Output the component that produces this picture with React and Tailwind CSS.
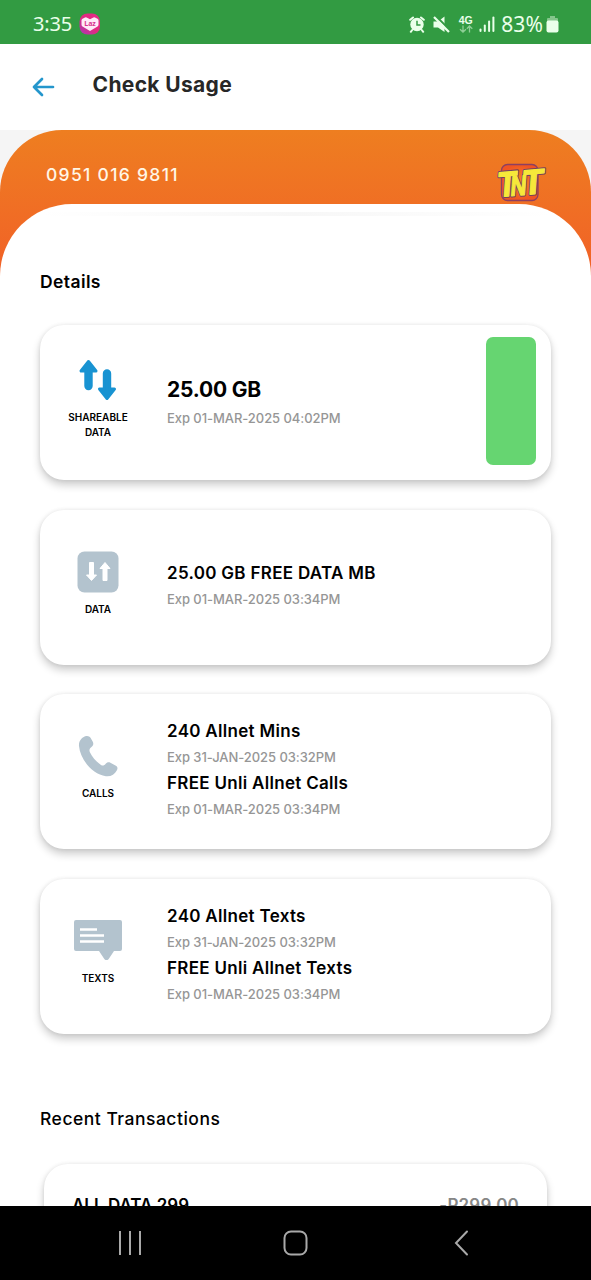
import React from 'react';

const ShareIcon = () => (
    <svg width="40" height="42" viewBox="0 0 40 42" fill="#1893d2" stroke="#1893d2" strokeLinejoin="round">
        <path d="M10.500 2.500 3 12H7.800V27a2.700 2.700 0 0 0 5.400 0V12H18Z" strokeWidth="3" />
        <path d="M29 39.500 21.500 30H26.300V14.500a2.700 2.700 0 0 1 5.400 0V30H36.500Z" strokeWidth="3" />
    </svg>
);

const DataIcon = () => (
    <svg width="42" height="42" viewBox="0 0 42 42">
        <rect x="0.5" y="0.5" width="41" height="41" rx="7" fill="#b3c3ce" />
        <g fill="#fff" stroke="#fff" strokeWidth="1" strokeLinejoin="round">
            <path d="M14.500 29.500 9.500 24H12.500V11.500H16.500V24H19.500Z" />
            <path d="M28 11.500 23 17.500H26V29.500H30V17.500H33Z" />
        </g>
    </svg>
);

const CallIcon = () => (
    <svg width="40" height="42" viewBox="0 0 40 42">
        <path
            d="M1 11C0.500 6 4 2 8 1c2-.4 3.500.3 4.500 1.800l2.300 4c1 2 .4 3.800-1.300 5.200-1.900 1.500-2.600 3-1.600 5.200 2.300 4.800 6.600 9.800 11.100 12.700 1.800 1.200 3.200.6 4.500-.9 1.300-1.600 3-2.200 4.900-1.300l5.500 3.100c1.700 1 2 2.600 1 4.400-2.200 4.300-6 6.500-11 6C14.500 39.500 2.200 24.500 1 11Z"
            fill="#b3c3ce"
        />
    </svg>
);

const TextIcon = () => (
    <svg width="48" height="42" viewBox="0 0 48 42">
        <path
            d="M2 0H46Q48 0 48 2V29Q48 31 46 31H40L34.500 39.200Q32.500 41 30.500 39.200L25 31H2Q0 31 0 29V2Q0 0 2 0Z"
            fill="#b3c3ce"
        />
        <path d="M6 9.500H23M6 15.500H30M6 21.500H30" stroke="#fff" strokeWidth="2.600" />
    </svg>
);

const TntLogo = () => (
    <svg width="50" height="42" viewBox="0 0 50 42" className="overflow-visible">
        <defs>
            <radialGradient id="tnt">
                <stop offset="0%" stopColor="#f58a1f" />
                <stop offset="100%" stopColor="#f05423" />
            </radialGradient>
        </defs>
        <rect x="5.500" y="2.500" width="36.500" height="36" rx="6" fill="url(#tnt)" stroke="#8c3f62" strokeWidth="1.300" />
        <g
            transform="rotate(-5 24 20) skewX(-9)"
            fontFamily="Liberation Sans, sans-serif"
            fontWeight="700"
            strokeLinejoin="round"
        >
            <g fill="#74405f" stroke="#74405f" strokeWidth="3.400">
                <text x="5" y="33" fontSize="35" textLength="19" lengthAdjust="spacingAndGlyphs">T</text>
                <text x="18" y="33" fontSize="28" textLength="16" lengthAdjust="spacingAndGlyphs">N</text>
                <text x="30" y="33" fontSize="35" textLength="21" lengthAdjust="spacingAndGlyphs">T</text>
            </g>
            <g fill="#f6e83a" stroke="#f6e83a" strokeWidth="1.300">
                <text x="5" y="33" fontSize="35" textLength="19" lengthAdjust="spacingAndGlyphs">T</text>
                <text x="18" y="33" fontSize="28" textLength="16" lengthAdjust="spacingAndGlyphs">N</text>
                <text x="30" y="33" fontSize="35" textLength="21" lengthAdjust="spacingAndGlyphs">T</text>
            </g>
        </g>
    </svg>
);

const StatusBar = () => (
    <div className="flex h-[43.5px] items-center bg-[#329b42] pt-[5px] pl-[33px] pr-8 font-['Noto_Sans'] text-[#eaffea]">
        <span className="text-[20px] leading-none tracking-[-0.2px]">3:35</span>
        <svg className="ml-[7px]" width="22" height="22" viewBox="0 0 22 22">
            <defs>
                <linearGradient id="laz" x1="0" y1="1" x2="1" y2="0">
                    <stop offset="0%" stopColor="#a63bb5" />
                    <stop offset="50%" stopColor="#e2297f" />
                    <stop offset="100%" stopColor="#e52b8a" />
                </linearGradient>
            </defs>
            <rect x="0.500" y="0.500" width="20.500" height="21" rx="8" fill="url(#laz)" />
            <path d="M11 18 3.500 13.500Q2.500 12.800 2.500 11.500V7.500Q2.500 6.300 3.500 5.700L6 4.400Q6.800 4 7.600 4.400L11 6.300 14.400 4.400Q15.200 4 16 4.400L18.500 5.700Q19.500 6.300 19.500 7.500V11.500Q19.500 12.800 18.500 13.500Z" fill="#ffeaf8" />
            <text x="11" y="13" fontSize="7" fontWeight="700" textAnchor="middle" fill="#d8358f">Laz</text>
        </svg>
        <div className="ml-auto flex items-center">
            <svg width="16" height="17" viewBox="0 0 16 17" fill="none" stroke="#eaffea">
                <circle cx="8" cy="8.500" r="6.700" fill="#eaffea" stroke="none" />
                <path d="M1.200 3.800 4 1.500M14.800 3.800 12 1.500M3.200 14 1.800 15.800M12.800 14l1.400 1.800" strokeWidth="2" strokeLinecap="round" />
                <path d="M8 4.800V9H11.500" stroke="#329b42" strokeWidth="1.500" />
            </svg>
            <svg className="ml-[8px]" width="17" height="17" viewBox="0 0 17 17">
                <path d="M0.500 5.500H5L11.500 0.500V16L5 11.500H0.500Z" fill="#eaffea" />
                <path d="M2.500 -0.300 17.500 14.700" stroke="#329b42" strokeWidth="2" />
                <path d="M1 1 16 16" stroke="#eaffea" strokeWidth="2.200" />
            </svg>
            <div className="ml-[8px] flex w-[15px] flex-col items-center">
                <span className="font-['Liberation_Sans'] text-[10.5px] leading-[10px] font-bold">4G</span>
                <svg width="14" height="8" viewBox="0 0 14 8" fill="none" stroke="#8fcf96" strokeWidth="1.300">
                    <path d="M4 0.500V7M1 4.200 4 7 7 4.200M10.500 7.500V1M7.800 3.800 10.500 1 13.300 3.800" />
                </svg>
            </div>
            <svg className="ml-[6px]" width="16" height="16" viewBox="0 0 16 16" fill="#eaffea">
                <rect x="0.500" y="12.500" width="2" height="3.500" rx="1" />
                <rect x="4.800" y="8.500" width="2" height="7.500" rx="1" />
                <rect x="9.100" y="4.500" width="2" height="11.500" rx="1" />
                <rect x="13.400" y="0.500" width="2" height="15.500" rx="1" />
            </svg>
            <span className="ml-[6px] text-[21px] leading-none tracking-[0.1px]">83%</span>
            <svg className="ml-[3px]" width="13" height="18" viewBox="0 0 13 18">
                <path d="M4 1H9V3H11Q12 3 12 4V6H1V4Q1 3 2 3H4Z" fill="#85c68c" />
                <rect x="0.500" y="5.500" width="12" height="12" rx="2" fill="#eaffea" />
            </svg>
        </div>
    </div>
);

const Header = () => (
    <header className="flex h-[86.5px] items-center bg-white pl-8">
        <svg width="23" height="20" viewBox="0 0 23 20" fill="none" stroke="#2496cc" strokeWidth="2.700" strokeLinecap="round" strokeLinejoin="round">
            <path d="M21 10H2M10 2 2 10 10 18" />
        </svg>
        <h1 className="ml-[37.5px] pb-1 text-[21px] font-bold tracking-[0.35px] text-[#272727]">Check Usage</h1>
    </header>
);

const usage = [
    {
        label: 'SHAREABLE DATA',
        icon: <ShareIcon />,
        items: [{ name: '25.00 GB', exp: 'Exp 01-MAR-2025 04:02PM' }],
        large: true
    },
    {
        label: 'DATA',
        icon: <DataIcon />,
        items: [{ name: '25.00 GB FREE DATA MB', exp: 'Exp 01-MAR-2025 03:34PM' }]
    },
    {
        label: 'CALLS',
        icon: <CallIcon />,
        items: [
            { name: '240 Allnet Mins', exp: 'Exp 31-JAN-2025 03:32PM' },
            { name: 'FREE Unli Allnet Calls', exp: 'Exp 01-MAR-2025 03:34PM' }
        ]
    },
    {
        label: 'TEXTS',
        icon: <TextIcon />,
        items: [
            { name: '240 Allnet Texts', exp: 'Exp 31-JAN-2025 03:32PM' },
            { name: 'FREE Unli Allnet Texts', exp: 'Exp 01-MAR-2025 03:34PM' }
        ]
    }
];

const UsageCard = ({ label, icon, items, large }) => (
    <div className="flex h-[155px] items-center rounded-[24px] bg-white pr-[15px] pl-[18px] shadow-[0_5px_9px_rgba(0,0,0,0.2),0_0_4px_rgba(0,0,0,0.08)]">
        <div className="flex w-20 flex-col items-center pb-[7px]">
            {icon}
            <span className="mt-[9px] text-center text-[10px] leading-[15px] font-semibold text-black">
                {label}
            </span>
        </div>
        <div className={large ? 'ml-[29px] flex-1 pb-[1px]' : 'ml-[29px] flex-1 pb-[3px]'}>
            {items.map((item) => (
                <div key={item.name}>
                    <p className={large
                        ? 'text-[21px] leading-[33px] font-bold tracking-[-0.2px] text-black'
                        : 'text-[17px] leading-[27px] font-semibold tracking-[0.3px] text-black'}
                    >
                        {item.name}
                    </p>
                    <p className="text-[13px] leading-[25px] font-medium tracking-[-0.06px] text-[#969696]">{item.exp}</p>
                </div>
            ))}
        </div>
        {large && <div className="mb-[3px] h-[128px] w-[50px] rounded-[7px] bg-[#66d571]" />}
    </div>
);

const NavBar = () => (
    <nav className="flex h-[74px] shrink-0 items-center justify-between bg-black pr-[117px] pl-[118px]">
        <svg width="24" height="24" viewBox="0 0 24 24" stroke="#a9a9a9" strokeWidth="2">
            <path d="M2 0V24M12 0V24M22 0V24" />
        </svg>
        <svg width="26" height="26" viewBox="0 0 26 26" fill="none" stroke="#a9a9a9" strokeWidth="2">
            <rect x="1.500" y="1.500" width="22" height="23" rx="6.500" />
        </svg>
        <svg width="24" height="26" viewBox="0 0 24 26" fill="none" stroke="#a9a9a9" strokeWidth="2" strokeLinecap="round">
            <path d="M17 1.500 6 13 17 24.500" />
        </svg>
    </nav>
);

const App = () => {
    return (
        <div className="flex h-[1280px] w-[591px] flex-col overflow-hidden bg-white font-['Inter',sans-serif]">
            <StatusBar />
            <Header />
            <main className="min-h-0 flex-1 overflow-hidden bg-[#f5f5f5]">
                <div className="rounded-t-[62px] bg-linear-to-b from-[#ee7e20] to-[#f16027] to-[145px]">
                    <div className="flex h-[74px] justify-between pr-[45px] pl-[46px]">
                        <span className="pt-[32px] text-[17.5px] font-medium tracking-[1.3px] text-[#fff6e6]">0951 016 9811</span>
                        <div className="pt-[31.5px]">
                            <TntLogo />
                        </div>
                    </div>
                    <div className="rounded-t-[72px] bg-white px-10 pt-2">
                        <div className="h-1 bg-linear-to-r from-white via-[#f7f7f7] to-white" />
                        <h2 className="pt-[52px] text-[17.5px] leading-[28px] font-semibold tracking-[0.4px] text-black">Details</h2>
                        <div className="mt-[29px] flex flex-col gap-[29.5px]">
                            {usage.map((card) => (
                                <UsageCard key={card.label} {...card} />
                            ))}
                        </div>
                        <h2 className="mt-[71px] text-[17.5px] leading-[28px] font-medium tracking-[0.5px] text-black">Recent Transactions</h2>
                        <div className="mx-1 mt-[31px] flex h-[150px] justify-between rounded-[24px] bg-white px-7 pt-[28px] text-[17px] leading-[27px] font-semibold shadow-[0_5px_9px_rgba(0,0,0,0.2),0_0_4px_rgba(0,0,0,0.08)]">
                            <span className="text-black">ALL DATA 299</span>
                            <span className="tracking-[0.2px] text-[#868686]">-P299.00</span>
                        </div>
                    </div>
                </div>
            </main>
            <NavBar />
        </div>
    );
};

export default App;
